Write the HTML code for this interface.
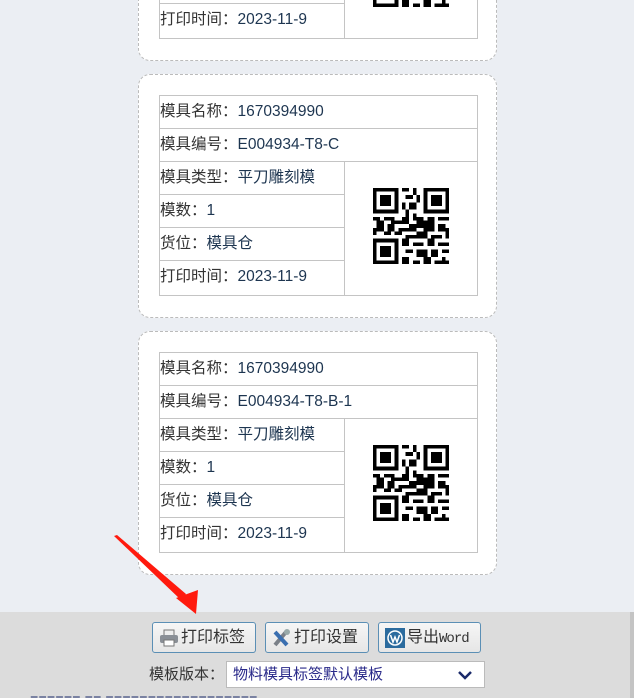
<!DOCTYPE html>
<html><head><meta charset="utf-8">
<style>
*{margin:0;padding:0;box-sizing:border-box}
html,body{width:634px;height:698px;overflow:hidden;background:#ebeef3;font-family:"Liberation Sans","Noto Sans CJK SC",sans-serif;}
.card{position:absolute;left:138px;width:359px;height:244px;background:#fff;border:1px dashed #bbb;border-radius:12px;}
.tbl{position:absolute;left:20px;top:20px;width:319px;height:201px;border:1px solid #c4c4c4;}
.row{position:absolute;left:0;height:33px;border-bottom:1px solid #c4c4c4;font-size:15.5px;line-height:32px;color:#333;padding-left:0;white-space:nowrap}
.row b{font-weight:normal;color:#1d3550}
.full{width:317px}
.half{width:185px;border-right:1px solid #c4c4c4}
.qr{position:absolute;left:213px;top:92px;width:76px;height:76px}
.bar{position:absolute;left:0;top:612px;width:634px;height:86px;background:#dcdcdc;border-right:4px solid #c4c4c4}
.btn{position:absolute;top:622px;height:31px;width:104px;border:1px solid #5b8fb5;border-radius:3px;background:linear-gradient(#f6f6f6,#e6e6e6);font-size:16px;color:#333;line-height:29px;padding-left:28px}
.btn svg{position:absolute;left:6px;top:5px}
.sel{position:absolute;left:226px;top:661px;width:259px;height:27px;background:#fff;border:1px solid #bbb;font-size:15px;color:#2a2a8a;line-height:25px;padding-left:6px}
</style></head><body>
<svg width="0" height="0" style="position:absolute">
<defs>
<g id="qr" fill="#000">
<path d="M0 0h7v7H0zM1 1v5h5V1zM2 2h3v3H2z" fill-rule="evenodd"/>
<path d="M14 0h7v7h-7zM15 1v5h5V1zM16 2h3v3h-3z" fill-rule="evenodd"/>
<path d="M0 14h7v7H0zM1 15v5h5v-5zM2 16h3v3H2z" fill-rule="evenodd"/>
<rect x="8" y="0" width="2" height="1"/><rect x="11" y="0" width="1" height="2"/><rect x="9" y="2" width="2" height="1"/><rect x="12" y="2" width="1" height="2"/><rect x="8" y="4" width="1" height="2"/><rect x="10" y="4" width="2" height="2"/><rect x="9" y="6" width="1" height="2"/><rect x="11" y="7" width="1" height="2"/>
<rect x="0" y="8" width="2" height="1"/><rect x="3" y="8" width="3" height="1"/><rect x="1" y="9" width="2" height="2"/><rect x="5" y="9" width="3" height="1"/><rect x="8" y="8" width="2" height="2"/><rect x="12" y="8" width="2" height="3"/><rect x="15" y="8" width="2" height="1"/><rect x="18" y="8" width="3" height="1"/>
<rect x="0" y="11" width="3" height="1"/><rect x="4" y="10" width="2" height="2"/><rect x="7" y="11" width="3" height="1"/><rect x="10" y="10" width="2" height="2"/><rect x="14" y="9" width="3" height="3"/><rect x="18" y="10" width="2" height="2"/><rect x="20" y="11" width="1" height="3"/>
<rect x="0" y="12" width="1" height="1"/><rect x="3" y="12" width="2" height="1"/><rect x="6" y="12" width="2" height="1"/><rect x="9" y="13" width="3" height="1"/><rect x="12" y="12" width="3" height="2"/><rect x="16" y="13" width="3" height="1"/>
<rect x="8" y="14" width="2" height="2"/><rect x="11" y="15" width="3" height="1"/><rect x="15" y="14" width="2" height="2"/><rect x="18" y="15" width="3" height="1"/><rect x="9" y="17" width="2" height="1"/><rect x="12" y="17" width="3" height="2"/><rect x="16" y="17" width="2" height="2"/><rect x="19" y="17" width="2" height="1"/>
<rect x="8" y="19" width="2" height="2"/><rect x="11" y="20" width="2" height="1"/><rect x="14" y="19" width="2" height="2"/><rect x="17" y="20" width="4" height="1"/><rect x="19" y="19" width="1" height="1"/>
</g></defs></svg>

<div class="card" style="top:-183px"><div class="tbl">
<div class="row full" style="top:0">模具名称：<b>1670394990</b></div>
<div class="row full" style="top:33px">模具编号：<b>E004934-T8-A</b></div>
<div class="row half" style="top:66px">模具类型：<b>平刀雕刻模</b></div>
<div class="row half" style="top:99px">模数：<b>1</b></div>
<div class="row half" style="top:132px">货位：<b>模具仓</b></div>
<div class="row half" style="top:165px;border-bottom:none;height:34px">打印时间：<b>2023-11-9</b></div>
<svg class="qr" viewBox="0 0 21 21" shape-rendering="crispEdges"><use href="#qr"/></svg>
</div></div>

<div class="card" style="top:74px"><div class="tbl">
<div class="row full" style="top:0">模具名称：<b>1670394990</b></div>
<div class="row full" style="top:33px">模具编号：<b>E004934-T8-C</b></div>
<div class="row half" style="top:66px">模具类型：<b>平刀雕刻模</b></div>
<div class="row half" style="top:99px">模数：<b>1</b></div>
<div class="row half" style="top:132px">货位：<b>模具仓</b></div>
<div class="row half" style="top:165px;border-bottom:none;height:34px">打印时间：<b>2023-11-9</b></div>
<svg class="qr" viewBox="0 0 21 21" shape-rendering="crispEdges"><use href="#qr"/></svg>
</div></div>

<div class="card" style="top:331px"><div class="tbl">
<div class="row full" style="top:0">模具名称：<b>1670394990</b></div>
<div class="row full" style="top:33px">模具编号：<b>E004934-T8-B-1</b></div>
<div class="row half" style="top:66px">模具类型：<b>平刀雕刻模</b></div>
<div class="row half" style="top:99px">模数：<b>1</b></div>
<div class="row half" style="top:132px">货位：<b>模具仓</b></div>
<div class="row half" style="top:165px;border-bottom:none;height:34px">打印时间：<b>2023-11-9</b></div>
<svg class="qr" viewBox="0 0 21 21" shape-rendering="crispEdges"><use href="#qr"/></svg>
</div></div>

<div class="bar"></div>
<div class="btn" style="left:152px"><svg width="20" height="20" viewBox="0 0 20 20"><rect x="5" y="2" width="10" height="6" fill="#eee" stroke="#777"/><rect x="1" y="7" width="18" height="8" rx="2" fill="#8a8f96"/><rect x="5" y="12" width="10" height="6" fill="#fff" stroke="#777"/></svg>打印标签</div>
<div class="btn" style="left:265px"><svg width="20" height="20" viewBox="0 0 20 20"><path d="M3 17L14 4" stroke="#7a8088" stroke-width="4"/><path d="M3 4l12 13" stroke="#3a6fb0" stroke-width="4"/><circle cx="15" cy="4" r="3" fill="#9aa"/></svg>打印设置</div>
<div class="btn" style="left:378px;width:103px"><svg width="20" height="20" viewBox="0 0 20 20"><rect x="0" y="0" width="20" height="20" fill="#2b6b9e"/><circle cx="10" cy="10" r="7" fill="none" stroke="#fff" stroke-width="1.5"/><path d="M5.5 7l2.5 7 2-5 2 5 2.5-7" stroke="#fff" stroke-width="1.5" fill="none"/></svg>导出<span style="font-family:'Liberation Mono',monospace;font-size:14px;letter-spacing:-1px">Word</span></div>
<div style="position:absolute;left:149px;top:662px;font-size:15px;color:#333;line-height:25px">模板版本：</div>
<div class="sel">物料模具标签默认模板<svg style="position:absolute;right:12px;top:9px" width="14" height="9" viewBox="0 0 14 9"><path d="M1 1l6 6 6-6" stroke="#1a2a6a" stroke-width="2.5" fill="none"/></svg></div>
<div style="position:absolute;left:0;top:696px;width:634px;height:2px;overflow:hidden;opacity:.5"><div style="position:absolute;left:30px;top:-10px;font-size:14px;color:#1a2a6a">■■■■■■ ■■ ■■■■■■■■■■■■■■■■■■</div></div>

<svg style="position:absolute;left:0;top:0" width="634" height="698">
<path d="M114 536 L117 535 L186 594 L181 600 Z" fill="#ff1a0e"/>
<path d="M176 598 L198 590 L196 614 Z" fill="#ff1a0e"/>
</svg>
</body></html>
